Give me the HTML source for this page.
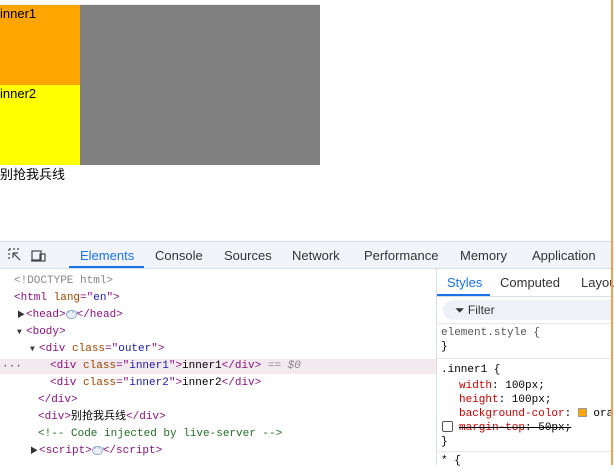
<!DOCTYPE html>
<html><head><meta charset="utf-8"><style>
*{margin:0;padding:0;box-sizing:border-box}
body{width:614px;height:465px;overflow:hidden;background:#fff;font-family:"Liberation Sans","Noto Sans CJK SC",sans-serif;position:relative}
.abs{position:absolute}
.mono{font-family:"Liberation Mono","Noto Sans CJK SC",monospace;font-size:11px;line-height:14px;height:14px;white-space:nowrap}
.tag{color:#881280}.attr{color:#994500}.val{color:#1a1aa6}
.tri{font-size:8px;display:inline-block;width:9px;color:#333}
.dots{display:inline-block;width:11px;height:9px;border:1px solid #9ab;border-radius:5px;background:#e8eefa;vertical-align:middle;font-size:7px;line-height:5px;text-align:center;color:#1a73e8}
.tab{position:absolute;top:248px;font-size:13px;color:#333;white-space:nowrap}
</style></head><body>
<div class="abs" style="left:0;top:4px;width:320px;height:1px;background:#eee"></div>
<div class="abs" style="left:0;top:5px;width:320px;height:160px;background:#808080"></div>
<div class="abs" style="left:0;top:5px;width:80px;height:80px;background:#ffa500;font-size:13px;line-height:17px">inner1</div>
<div class="abs" style="left:0;top:85px;width:80px;height:80px;background:#ff0;font-size:13px;line-height:17px">inner2</div>
<div class="abs" style="left:0;top:166px;font-size:13px;line-height:17px">别抢我兵线</div>

<div class="abs" style="left:0;top:241px;width:614px;height:28px;background:#f1f4fa;border-top:1px solid #d6dde8;border-bottom:1px solid #d6dde8"></div>
<svg class="abs" style="left:8px;top:248px" width="48" height="16" viewBox="0 0 48 16" fill="none" stroke="#444" stroke-width="1.2"><path d="M1 1h2M5 1h2M9 1h2M1 1v2M1 5v2M1 9v2"/><path d="M5 5l7 7M5 5v5M5 5h5"/><rect x="24" y="3" width="9" height="9"/><rect x="32" y="6" width="5" height="7"/><path d="M23 13h9"/></svg>
<div class="tab" style="left:80px;color:#1a73e8">Elements</div>
<div class="abs" style="left:69px;top:266px;width:75px;height:2px;background:#1a73e8"></div>
<div class="tab" style="left:155px">Console</div>
<div class="tab" style="left:224px">Sources</div>
<div class="tab" style="left:292px">Network</div>
<div class="tab" style="left:364px">Performance</div>
<div class="tab" style="left:460px">Memory</div>
<div class="tab" style="left:532px">Application</div>

<div class="abs" style="left:0;top:359px;width:436px;height:15px;background:#f3eaf0"></div>
<div class="abs mono" style="left:2px;top:360px;color:#555">···</div>
<div class="abs mono" style="left:14px;top:274px;color:#888">&lt;!DOCTYPE html&gt;</div>
<div class="abs mono" style="left:14px;top:291px"><span class="tag">&lt;html</span> <span class="attr">lang</span><span class="tag">="</span><span class="val">en</span><span class="tag">"&gt;</span></div>
<div class="abs mono" style="left:17px;top:308px"><span class="tri">▶</span><span class="tag">&lt;head&gt;</span><span class="dots">···</span><span class="tag">&lt;/head&gt;</span></div>
<div class="abs mono" style="left:17px;top:325px"><span class="tri">▼</span><span class="tag">&lt;body&gt;</span></div>
<div class="abs mono" style="left:30px;top:342px"><span class="tri">▼</span><span class="tag">&lt;div</span> <span class="attr">class</span><span class="tag">="</span><span class="val">outer</span><span class="tag">"&gt;</span></div>
<div class="abs mono" style="left:50px;top:359px"><span class="tag">&lt;div</span> <span class="attr">class</span><span class="tag">="</span><span class="val">inner1</span><span class="tag">"&gt;</span>inner1<span class="tag">&lt;/div&gt;</span> <span style="color:#888;font-style:italic">== $0</span></div>
<div class="abs mono" style="left:50px;top:376px"><span class="tag">&lt;div</span> <span class="attr">class</span><span class="tag">="</span><span class="val">inner2</span><span class="tag">"&gt;</span>inner2<span class="tag">&lt;/div&gt;</span></div>
<div class="abs mono" style="left:38px;top:393px"><span class="tag">&lt;/div&gt;</span></div>
<div class="abs mono" style="left:38px;top:410px"><span class="tag">&lt;div&gt;</span>别抢我兵线<span class="tag">&lt;/div&gt;</span></div>
<div class="abs mono" style="left:38px;top:427px;color:#236e25">&lt;!-- Code injected by live-server --&gt;</div>
<div class="abs mono" style="left:30px;top:444px"><span class="tri">▶</span><span class="tag">&lt;script&gt;</span><span class="dots">···</span><span class="tag">&lt;/script&gt;</span></div>

<div class="abs" style="left:436px;top:269px;width:1px;height:196px;background:#d6dde8"></div>
<div class="abs" style="left:437px;top:269px;width:177px;height:28px;background:#fff;border-bottom:1px solid #d6dde8"></div>
<div class="abs" style="left:447px;top:275px;font-size:13px;color:#1a73e8">Styles</div>
<div class="abs" style="left:437px;top:294px;width:53px;height:2px;background:#1a73e8"></div>
<div class="abs" style="left:500px;top:275px;font-size:13px;color:#333">Computed</div>
<div class="abs" style="left:581px;top:275px;font-size:13px;color:#333">Layout</div>
<div class="abs" style="left:443px;top:300px;width:171px;height:20px;background:#eef2f8;border-radius:10px 0 0 10px"></div>
<div class="abs" style="left:455px;top:303px;font-size:12px;color:#333">⏷ Filter</div>
<div class="abs" style="left:437px;top:323px;width:177px;height:1px;background:#e3e6ea"></div>
<div class="abs mono" style="left:441px;top:326px;color:#555">element.style {</div>
<div class="abs mono" style="left:441px;top:340px">}</div>
<div class="abs" style="left:437px;top:358px;width:177px;height:1px;background:#e3e6ea"></div>
<div class="abs mono" style="left:441px;top:363px">.inner1 {</div>
<div class="abs mono" style="left:459px;top:379px"><span style="color:#c80000">width</span>: 100px;</div>
<div class="abs mono" style="left:459px;top:393px"><span style="color:#c80000">height</span>: 100px;</div>
<div class="abs mono" style="left:459px;top:407px"><span style="color:#c80000">background-color</span>: <span style="display:inline-block;width:9px;height:9px;background:#ffa500;border:1px solid #999;vertical-align:-1px"></span> orange;</div>
<div class="abs" style="left:442px;top:421px;width:11px;height:11px;border:1px solid #555;border-radius:2px"></div>
<div class="abs mono" style="left:459px;top:421px;text-decoration:line-through"><span style="color:#c80000">margin-top</span>: 50px;</div>
<div class="abs mono" style="left:441px;top:435px">}</div>
<div class="abs" style="left:437px;top:451px;width:177px;height:1px;background:#e3e6ea"></div>
<div class="abs mono" style="left:441px;top:454px">* {</div>
<div class="abs" style="left:611px;top:0;width:2px;height:465px;background:#f5a04a"></div>
</body></html>
